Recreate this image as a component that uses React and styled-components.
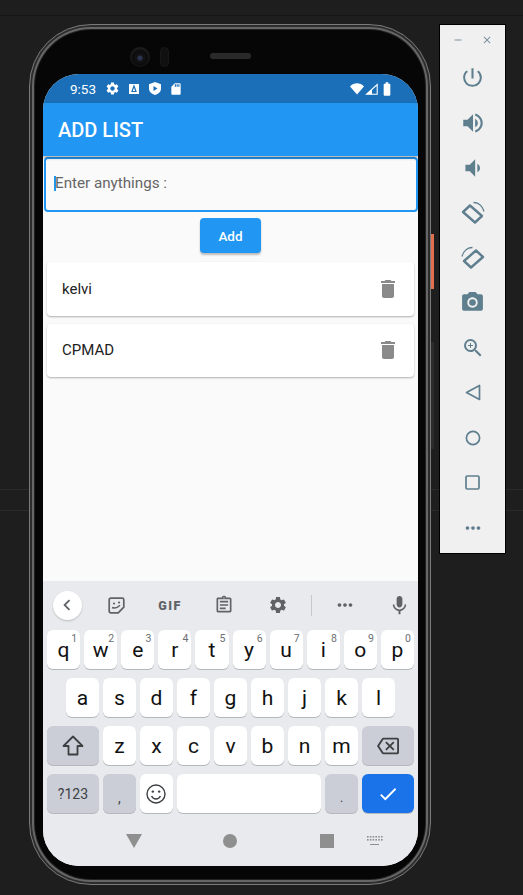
import React from "react";
import styled, { createGlobalStyle } from "styled-components";
import {
  MdSettings,
  MdSdCard,
  MdDelete,
  MdChevronLeft,
  MdOutlineAssignment,
  MdMoreHoriz,
  MdMic,
  MdCheck,
  MdOutlineBackspace,
  MdPowerSettingsNew,
  MdVolumeUp,
  MdVolumeDown,
  MdCameraAlt,
  MdZoomIn,
  MdClose,
  MdRemove,
  MdBatteryFull,
} from "react-icons/md";

const GlobalStyle = createGlobalStyle`
  html, body {
    margin: 0;
    padding: 0;
    height: 895px;
    overflow: hidden;
    background: #1e1e1e;
    font-family: Roboto, "Liberation Sans", sans-serif;
  }
  * { box-sizing: border-box; }
`;

const Page = styled.div`
  width: 523px;
  height: 895px;
  background-color: #1e1e1e;
  background-image:
    linear-gradient(#2a2a2a, #2a2a2a),
    linear-gradient(#2a2a2a, #2a2a2a),
    linear-gradient(#151515, #151515);
  background-size: 100% 1px, 100% 1px, 100% 1px;
  background-position: 0 489px, 0 510px, 0 15px;
  background-repeat: no-repeat;
  display: flex;
  align-items: flex-start;
  padding: 24px 0 0 29px;
`;

const Phone = styled.div`
  position: relative;
  width: 402px;
  height: 861px;
  border-radius: 62px;
  background: #060606;
  border: 1px solid #7a7a7a;
  box-shadow:
    inset 0 0 0 2px #2c2c2c,
    inset 0 0 0 4px #666,
    inset 0 0 0 5px #222;
  padding: 49px 12px 18px 13px;
`;

const SideButton = styled.div`
  position: absolute;
  left: 401px;
  top: ${(p) => p.$top}px;
  width: 3px;
  height: ${(p) => p.$height}px;
  background: ${(p) => p.$color};
`;

const Camera = styled.div`
  position: absolute;
  left: 100px;
  top: 22px;
  width: 20px;
  height: 20px;
  border-radius: 50%;
  background: radial-gradient(circle at 50% 55%, #2a3350 0 2px, #141418 3px, #0c0c0c 7px, #1c1c1c 10px);
`;

const Sensor = styled.div`
  position: absolute;
  left: 130px;
  top: 22px;
  width: 9px;
  height: 20px;
  border-radius: 5px;
  background: #101010;
  border: 1px solid #181818;
`;

const Speaker = styled.div`
  position: absolute;
  left: 180px;
  top: 28px;
  width: 41px;
  height: 6px;
  border-radius: 3px;
  background: #2a2a2a;
`;

const Screen = styled.div`
  width: 375px;
  height: 792px;
  border-radius: 36px;
  overflow: hidden;
  background: #fafafa;
  display: flex;
  flex-direction: column;
`;

const StatusBar = styled.div`
  height: 29px;
  background: #1a6fb8;
  color: #fff;
  display: flex;
  align-items: center;
  padding: 0 23px 0 27px;
  font-size: 13.5px;
`;

const StatusTime = styled.span`
  width: 33px;
  margin-right: -1px;
`;

const StatusSlot = styled.span`
  width: 21px;
  display: flex;
  justify-content: center;
`;

const StatusRight = styled.div`
  margin-left: auto;
  display: flex;
  align-items: center;
  gap: 1px;
`;

const AppBar = styled.div`
  height: 53px;
  background: #2196f3;
  color: #fff;
  font-size: 20px;
  font-weight: 500;
  display: flex;
  align-items: center;
  padding-left: 15px;
  box-shadow: 0 2px 3px rgba(0, 0, 0, 0.3);
  position: relative;
`;

const InputBox = styled.div`
  margin: 1px 0 0 1px;
  height: 55px;
  border: 2px solid #2196f3;
  border-radius: 4px;
  display: flex;
  align-items: center;
  padding: 0 0 3px 8px;
  font-size: 15.2px;
  color: #666;
`;

const Caret = styled.span`
  width: 2px;
  height: 15px;
  background: #2196f3;
  margin-right: -1px;
`;

const AddRow = styled.div`
  display: flex;
  justify-content: center;
  margin: 6px 0 9px;
`;

const AddButton = styled.button`
  width: 61px;
  height: 35px;
  border: none;
  border-radius: 4px;
  background: #2196f3;
  color: #fff;
  font: 500 13.5px Roboto, sans-serif;
  box-shadow: 0 2px 2px rgba(0, 0, 0, 0.25);
`;

const List = styled.div`
  flex: 1;
  display: flex;
  flex-direction: column;
  gap: 8px;
  padding: 0 4px;
`;

const Card = styled.div`
  height: ${(p) => p.$height}px;
  background: #fff;
  border-radius: 4px;
  box-shadow: 0 1px 2px rgba(0, 0, 0, 0.3);
  display: flex;
  align-items: center;
  justify-content: space-between;
  padding: 0 14px 1px 15px;
  font-size: 15px;
  color: #222;
`;

const Keyboard = styled.div`
  height: 285px;
  background: #e8eaed;
  display: flex;
  flex-direction: column;
`;

const Toolbar = styled.div`
  height: 46px;
  padding: 2px 0 0 9px;
  display: grid;
  grid-template-columns: 30px 68px 40px 68px 40px 26px 42px 66px;
  align-items: center;
  justify-items: center;
  color: #5f6368;
`;

const BackCircle = styled.div`
  width: 29px;
  height: 29px;
  border-radius: 50%;
  background: #fff;
  box-shadow: 0 1px 2px rgba(0, 0, 0, 0.2);
  display: flex;
  align-items: center;
  justify-content: center;
  color: #5f6368;
`;

const GifLabel = styled.span`
  font-size: 12.5px;
  font-weight: 900;
  letter-spacing: 1.5px;
`;

const Divider = styled.div`
  width: 1px;
  height: 21px;
  background: #c4c7cc;
`;

const Keys = styled.div`
  display: flex;
  flex-direction: column;
  gap: 9px;
  padding: 3px 4px 0;
`;

const KeyRow = styled.div`
  display: flex;
  justify-content: center;
  gap: 4px;
  height: 39px;
`;

const Key = styled.div`
  position: relative;
  width: ${(p) => p.$width || 33}px;
  background: ${(p) => p.$bg || "#fff"};
  color: ${(p) => p.$color || "#111"};
  border-radius: 6px;
  box-shadow: 0 1px 0 #b4b7bc;
  display: flex;
  align-items: center;
  justify-content: center;
  padding-top: ${(p) => p.$drop || 0}px;
  font-size: ${(p) => p.$size || 21}px;
`;

const Hint = styled.span`
  position: absolute;
  top: 2px;
  right: 3px;
  font-size: 10.5px;
  color: #6b6f74;
`;

const NavBar = styled.div`
  flex: 1;
  display: flex;
  align-items: center;
  padding: 3px 0 0 76px;
  color: #8f8f8f;
`;

const NavSlot = styled.div`
  width: 30px;
  margin-right: ${(p) => p.$after || 0}px;
  display: flex;
  justify-content: center;
`;

const Triangle = styled.div`
  width: 0;
  height: 0;
  border-left: 8px solid transparent;
  border-right: 8px solid transparent;
  border-top: 14px solid #8f8f8f;
`;

const Dot = styled.div`
  width: 14px;
  height: 14px;
  border-radius: 50%;
  background: #8f8f8f;
`;

const Square = styled.div`
  width: 14px;
  height: 14px;
  background: #8f8f8f;
`;

const Panel = styled.div`
  width: 67px;
  height: 530px;
  margin-left: 8px;
  background: #f0f0f0;
  border: 1px solid #000;
  color: #5f7f8f;
  display: flex;
  flex-direction: column;
`;

const PanelHeader = styled.div`
  height: 30px;
  display: flex;
  align-items: center;
  justify-content: space-between;
  padding: 0 12px 0 12px;
  color: #7d939e;
`;

const PanelButton = styled.div`
  height: 45px;
  display: flex;
  align-items: center;
  justify-content: center;
`;

const WifiIcon = () => (
  <svg width="14" height="12" viewBox="0 0 14 12">
    <path d="M0 3.4C3.8-.8 10.2-.8 14 3.4L7 11.5z" fill="#fff" />
  </svg>
);

const SignalIcon = () => (
  <svg width="13" height="12" viewBox="0 0 13 12">
    <path d="M12.2 1.5V11.3H1.5z" fill="none" stroke="#fff" strokeWidth="1.1" />
    <path d="M1.5 11.3L7 6.5V11.3z" fill="#fff" />
  </svg>
);

const AccountIcon = () => (
  <svg width="10" height="10" viewBox="0 0 10 10">
    <path d="M0 0H10V10H0z" fill="#fff" />
    <path d="M5 2L3 7.5H7z" fill="none" stroke="#1a6fb8" strokeWidth="1.2" />
  </svg>
);

const ShieldIcon = () => (
  <svg width="12" height="13" viewBox="0 0 12 13">
    <path d="M6 0L12 2.2V6.5C12 9.6 9.5 12 6 13 2.5 12 0 9.6 0 6.5V2.2z" fill="#fff" />
    <path d="M4.5 4L8.5 6.5 4.5 9z" fill="#1a6fb8" />
  </svg>
);

const StickerIcon = () => (
  <svg width="17" height="17" viewBox="0 0 17 17">
    <path
      d="M3 1.2H14.2C15.2 1.2 15.8 1.8 15.8 2.8V10.2L10.2 15.8H3C2 15.8 1.2 15 1.2 14V3C1.2 2 2 1.2 3 1.2z"
      fill="none"
      stroke="#5f6368"
      strokeWidth="1.7"
    />
    <path d="M4 10.5C6.5 11.5 9.5 10.8 12 8.2" fill="none" stroke="#5f6368" strokeWidth="1.5" />
    <circle cx="6" cy="6.5" r="1.1" fill="#5f6368" />
    <circle cx="11" cy="5.5" r="1.1" fill="#5f6368" />
  </svg>
);

const ShiftIcon = () => (
  <svg width="22" height="21" viewBox="0 0 22 21">
    <path
      d="M11 1.5L20.5 11H15.5V19.5H6.5V11H1.5z"
      fill="none"
      stroke="#3c4043"
      strokeWidth="1.8"
      strokeLinejoin="round"
    />
  </svg>
);

const SmileIcon = () => (
  <svg width="20" height="20" viewBox="0 0 20 20">
    <circle cx="10" cy="10" r="9" fill="none" stroke="#3c4043" strokeWidth="1.4" />
    <circle cx="6.8" cy="7.6" r="1.2" fill="#3c4043" />
    <circle cx="13.2" cy="7.6" r="1.2" fill="#3c4043" />
    <path d="M5.6 12C6.6 14.2 8.2 15 10 15S13.4 14.2 14.4 12" fill="none" stroke="#3c4043" strokeWidth="1.4" />
  </svg>
);

const RotateIcon = ({ flip }) => (
  <svg width="24" height="24" viewBox="0 0 24 24" style={{ transform: flip ? "scaleX(-1)" : "none" }}>
    <path d="M9 4.5L21 15 14 21.5 2 11z" fill="none" stroke="#5f7f8f" strokeWidth="2.4" strokeLinejoin="round" />
    <path d="M12.5 1.5C17 1.5 21.5 4.5 23 10.5" fill="none" stroke="#5f7f8f" strokeWidth="1.3" />
  </svg>
);

const BackOutline = () => (
  <svg width="16" height="17" viewBox="0 0 16 17">
    <path d="M14.5 1.5V15.5L1.5 8.5z" fill="none" stroke="#5f7f8f" strokeWidth="1.7" strokeLinejoin="round" />
  </svg>
);

const CircleOutline = () => (
  <svg width="16" height="16" viewBox="0 0 16 16">
    <circle cx="8" cy="8" r="6.6" fill="none" stroke="#5f7f8f" strokeWidth="1.7" />
  </svg>
);

const SquareOutline = () => (
  <svg width="15" height="15" viewBox="0 0 15 15">
    <rect x="1" y="1" width="13" height="13" rx="1.2" fill="none" stroke="#5f7f8f" strokeWidth="1.7" />
  </svg>
);

const KeyboardGlyph = () => (
  <svg width="16" height="10" viewBox="0 0 16 10" fill="#8f8f8f">
    {[0, 1, 2, 3, 4, 5].map((i) => (
      <rect key={i} x={i * 2.8} y="0" width="1.6" height="1.6" />
    ))}
    {[0, 1, 2, 3, 4, 5].map((i) => (
      <rect key={i} x={i * 2.8} y="3" width="1.6" height="1.6" />
    ))}
    <rect x="3" y="8" width="9" height="1" />
  </svg>
);

const row1 = [
  ["q", 1],
  ["w", 2],
  ["e", 3],
  ["r", 4],
  ["t", 5],
  ["y", 6],
  ["u", 7],
  ["i", 8],
  ["o", 9],
  ["p", 0],
];
const row2 = ["a", "s", "d", "f", "g", "h", "j", "k", "l"];
const row3 = ["z", "x", "c", "v", "b", "n", "m"];

const App = () => {
  return (
    <Page>
      <GlobalStyle />
      <Phone>
        <SideButton $top={209} $height={55} $color="#e0704f" />
        <SideButton $top={317} $height={107} $color="#2b2b2b" />
        <Camera />
        <Sensor />
        <Speaker />
        <Screen>
          <StatusBar>
            <StatusTime>9:53</StatusTime>
            <StatusSlot>
              <MdSettings size={15} />
            </StatusSlot>
            <StatusSlot>
              <AccountIcon />
            </StatusSlot>
            <StatusSlot>
              <ShieldIcon />
            </StatusSlot>
            <StatusSlot>
              <MdSdCard size={14} />
            </StatusSlot>
            <StatusRight>
              <WifiIcon />
              <SignalIcon />
              <MdBatteryFull size={16} />
            </StatusRight>
          </StatusBar>
          <AppBar>ADD LIST</AppBar>
          <InputBox>
            <Caret />
            Enter anythings :
          </InputBox>
          <AddRow>
            <AddButton>Add</AddButton>
          </AddRow>
          <List>
            <Card $height={54}>
              kelvi
              <MdDelete size={24} color="#8a8a8a" />
            </Card>
            <Card $height={53}>
              CPMAD
              <MdDelete size={24} color="#8a8a8a" />
            </Card>
          </List>
          <Keyboard>
            <Toolbar>
              <BackCircle>
                <MdChevronLeft size={22} />
              </BackCircle>
              <StickerIcon />
              <GifLabel>GIF</GifLabel>
              <MdOutlineAssignment size={20} />
              <MdSettings size={20} />
              <Divider />
              <MdMoreHoriz size={22} />
              <MdMic size={23} />
            </Toolbar>
            <Keys>
              <KeyRow>
                {row1.map(([k, n]) => (
                  <Key key={k} $width={33.1}>
                    {k}
                    <Hint>{n}</Hint>
                  </Key>
                ))}
              </KeyRow>
              <KeyRow>
                {row2.map((k) => (
                  <Key key={k}>{k}</Key>
                ))}
              </KeyRow>
              <KeyRow>
                <Key $width={52} $bg="#cbced6">
                  <ShiftIcon />
                </Key>
                {row3.map((k) => (
                  <Key key={k}>{k}</Key>
                ))}
                <Key $width={52} $bg="#cbced6">
                  <MdOutlineBackspace size={22} color="#3c4043" />
                </Key>
              </KeyRow>
              <KeyRow>
                <Key $width={52} $bg="#cbced6" $size={14} $color="#3c4043">
                  ?123
                </Key>
                <Key $bg="#cbced6" $size={14} $color="#3c4043" $drop={8}>
                  ,
                </Key>
                <Key>
                  <SmileIcon />
                </Key>
                <Key $width={145} />
                <Key $bg="#cbced6" $size={12} $color="#3c4043" $drop={8}>
                  .
                </Key>
                <Key $width={52} $bg="#1a73e8">
                  <MdCheck size={22} color="#fff" />
                </Key>
              </KeyRow>
            </Keys>
            <NavBar>
              <NavSlot $after={66}>
                <Triangle />
              </NavSlot>
              <NavSlot $after={67}>
                <Dot />
              </NavSlot>
              <NavSlot $after={18}>
                <Square />
              </NavSlot>
              <NavSlot>
                <KeyboardGlyph />
              </NavSlot>
            </NavBar>
          </Keyboard>
        </Screen>
      </Phone>
      <Panel>
        <PanelHeader>
          <MdRemove size={12} />
          <MdClose size={12} />
        </PanelHeader>
        <PanelButton>
          <MdPowerSettingsNew size={25} />
        </PanelButton>
        <PanelButton>
          <MdVolumeUp size={26} />
        </PanelButton>
        <PanelButton>
          <MdVolumeDown size={26} />
        </PanelButton>
        <PanelButton>
          <RotateIcon />
        </PanelButton>
        <PanelButton>
          <RotateIcon flip />
        </PanelButton>
        <PanelButton>
          <MdCameraAlt size={25} />
        </PanelButton>
        <PanelButton>
          <MdZoomIn size={24} />
        </PanelButton>
        <PanelButton>
          <BackOutline />
        </PanelButton>
        <PanelButton>
          <CircleOutline />
        </PanelButton>
        <PanelButton>
          <SquareOutline />
        </PanelButton>
        <PanelButton>
          <MdMoreHoriz size={22} />
        </PanelButton>
      </Panel>
    </Page>
  );
};

export default App;
